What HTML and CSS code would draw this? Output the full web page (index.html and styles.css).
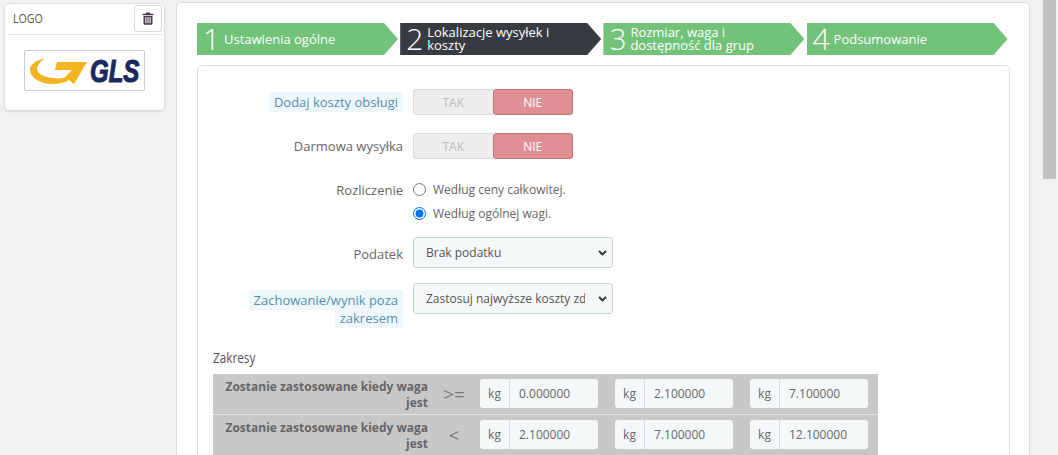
FILE: index.html
```html
<!DOCTYPE html>
<html lang="pl">
<head>
    <meta charset="UTF-8">
    <title>Przewoźnik</title>
    <link rel="stylesheet" href="styles.css">
</head>
<body>
    <div class="page">
        <aside class="logo-card">
            <div class="logo-head">
                <span class="logo-title">LOGO</span>
                <button class="trash-button" type="button">
                    <svg width="12" height="13" viewBox="0 0 12 13">
                        <path d="M4.2 0.5h3.6l0.6 1.300H11.500v1.500H0.500V1.800h3.100z" fill="#4c3b4e"/>
                        <path fill-rule="evenodd" d="M1.500 4h9v7.500a1.200 1.200 0 0 1-1.200 1.200H2.700a1.200 1.200 0 0 1-1.200-1.200zM3.300 5.300v6h1.100v-6zM5.450 5.300v6h1.100v-6zM7.600 5.300v6h1.100v-6z" fill="#4c3b4e"/>
                    </svg>
                </button>
            </div>
            <div class="logo-box">
                <svg class="gls-arrow" width="65" height="39" viewBox="0 0 65 39">
                    <path d="M20 7C10 10 4 14 5 20c1 7 11 13 22 13 6 0 11-1 16-3l1-5c-5 2-10 3-16 2C18 26 11 22 12 17c1-4 4-7 8-10z" fill="#f2b322"/>
                    <path d="M32 11h30L49 33 40 26 47 19H30z" fill="#f5b41f"/>
                </svg>
                <span class="gls-text">GLS</span>
            </div>
        </aside>

        <main class="main-card">
            <ul class="steps">
                <li class="step"><span class="step-num">1</span><span class="step-text">Ustawienia ogólne</span></li>
                <li class="step step-active"><span class="step-num">2</span><span class="step-text">Lokalizacje wysyłek i koszty</span></li>
                <li class="step"><span class="step-num">3</span><span class="step-text">Rozmiar, waga i dostępność dla grup</span></li>
                <li class="step"><span class="step-num">4</span><span class="step-text">Podsumowanie</span></li>
            </ul>

            <form class="panel">
                <div class="row row-switch">
                    <label class="row-label"><span class="hint">Dodaj koszty obsługi</span></label>
                    <div class="switch"><span class="switch-off">TAK</span><span class="switch-on">NIE</span></div>
                </div>
                <div class="row row-switch">
                    <label class="row-label">Darmowa wysyłka</label>
                    <div class="switch"><span class="switch-off">TAK</span><span class="switch-on">NIE</span></div>
                </div>
                <div class="row row-radio">
                    <label class="row-label">Rozliczenie</label>
                    <div class="radios">
                        <label class="radio"><input type="radio" name="billing">Według ceny całkowitej.</label>
                        <label class="radio"><input type="radio" name="billing" checked>Według ogólnej wagi.</label>
                    </div>
                </div>
                <div class="row row-select">
                    <label class="row-label">Podatek</label>
                    <div class="select-wrap">
                        <select class="field-select"><option>Brak podatku</option></select>
                        <svg class="select-arrow" width="9" height="6" viewBox="0 0 9 6"><path d="M1 1l3.500 3.500L8 1" fill="none" stroke="#333" stroke-width="1.800"/></svg>
                    </div>
                </div>
                <div class="row row-select">
                    <label class="row-label"><span class="hint">Zachowanie/wynik poza zakresem</span></label>
                    <div class="select-wrap">
                        <select class="field-select"><option>Zastosuj najwyższe koszty zdefiniowane</option></select>
                        <svg class="select-arrow" width="9" height="6" viewBox="0 0 9 6"><path d="M1 1l3.500 3.500L8 1" fill="none" stroke="#333" stroke-width="1.800"/></svg>
                    </div>
                </div>

                <h3 class="ranges-title"><span class="narrow">Zakresy</span></h3>
                <table class="ranges">
                    <tr>
                        <td class="range-label">Zostanie zastosowane kiedy waga jest</td>
                        <td class="range-sign">&gt;=</td>
                        <td class="range-cell"><div class="unit-input"><span class="unit">kg</span><span class="unit-value">0.000000</span></div></td>
                        <td class="range-cell"><div class="unit-input"><span class="unit">kg</span><span class="unit-value">2.100000</span></div></td>
                        <td class="range-cell range-last"><div class="unit-input"><span class="unit">kg</span><span class="unit-value">7.100000</span></div></td>
                    </tr>
                    <tr>
                        <td class="range-label">Zostanie zastosowane kiedy waga jest</td>
                        <td class="range-sign">&lt;</td>
                        <td class="range-cell"><div class="unit-input"><span class="unit">kg</span><span class="unit-value">2.100000</span></div></td>
                        <td class="range-cell"><div class="unit-input"><span class="unit">kg</span><span class="unit-value">7.100000</span></div></td>
                        <td class="range-cell range-last"><div class="unit-input"><span class="unit">kg</span><span class="unit-value">12.100000</span></div></td>
                    </tr>
                </table>
            </form>
        </main>

        <div class="scrollbar"><div class="scrollbar-thumb"></div></div>
    </div>
</body>
</html>
```

FILE: styles.css
```css
html, body {
    height: 100%;
    overflow: hidden;
}
body {
    margin: 0;
    background-color: #eff1f2;
    color: #666;
    font-family: 'Open Sans', sans-serif;
    font-size: 12px;
}
.page {
    display: flex;
    align-items: flex-start;
    height: 455px;
    overflow: hidden;
    padding: 3px 0 0 4px;
    box-sizing: border-box;
}

/* left card */
.logo-card {
    width: 161px;
    height: 108px;
    box-sizing: border-box;
    padding: 1px 2px 0 3px;
    background-color: #fff;
    border: 1px solid #dcdfe0;
    border-radius: 5px;
    box-shadow: 0 1px 2px rgba(0, 0, 0, 0.08);
}
.logo-head {
    display: flex;
    justify-content: space-between;
    align-items: flex-start;
    height: 30px;
    box-sizing: border-box;
    padding-left: 5px;
    border-bottom: 1px solid #e6e6e6;
}
.logo-title {
    display: inline-block;
    font-size: 13px;
    line-height: 27px;
    color: #555;
    transform: scaleX(0.82);
    transform-origin: left center;
}
.trash-button {
    display: flex;
    align-items: center;
    justify-content: center;
    width: 28px;
    height: 27px;
    padding: 0;
    background-color: #fff;
    border: 1px solid #d9d9d9;
    border-radius: 3px;
}
.logo-box {
    display: flex;
    align-items: flex-start;
    width: 119px;
    height: 39px;
    margin: 15px 0 0 16px;
    background-color: #fff;
    border: 1px solid #ccc;
    border-radius: 2px;
}
.gls-text {
    display: inline-block;
    font-family: 'Liberation Sans', sans-serif;
    font-size: 24px;
    line-height: 39px;
    font-weight: bold;
    font-style: italic;
    color: #1b2a5e;
    -webkit-text-stroke: 0.9px #1b2a5e;
    transform: scaleY(1.33);
    transform-origin: center;
}

/* main card */
.main-card {
    width: 854px;
    height: 460px;
    margin: -1px 0 0 11px;
    box-sizing: border-box;
    padding: 20px 20px 0 19px;
    background-color: #fff;
    border: 1px solid #dcdfe0;
    border-radius: 5px;
    flex-shrink: 0;
}
.steps {
    display: flex;
    gap: 2.2px;
    list-style: none;
    margin: 0 0 10px 1px;
    padding: 0;
}
.step {
    display: flex;
    align-items: center;
    width: 201px;
    height: 32px;
    box-sizing: border-box;
    padding-left: 6px;
    padding-right: 20px;
    background-color: #72c279;
    color: #fff;
    clip-path: polygon(0 0, 187px 0, 100% 50%, 187px 100%, 0 100%);
}
.step-active {
    background-color: #363a41;
}
.step-num {
    flex-shrink: 0;
    font-size: 30px;
    line-height: 32px;
    font-weight: 300;
    width: 17px;
    margin-right: 4px;
}
.step-text {
    font-size: 13px;
    line-height: 13px;
}

.panel {
    width: 813px;
    height: 420px;
    margin-left: 1px;
    box-sizing: border-box;
    padding: 23px 15px 0 15px;
    border: 1px solid #dcdfe0;
    border-radius: 5px;
}
.row {
    display: flex;
    gap: 10px;
}
.row-label {
    width: 190px;
    flex-shrink: 0;
    text-align: right;
    font-size: 13px;
    line-height: 18px;
    color: #666;
}
.hint {
    background-color: #eef7fb;
    color: #5a8ea8;
    padding: 1px 5px;
    -webkit-box-decoration-break: clone;
    box-decoration-break: clone;
}

/* yes / no switch */
.row-switch {
    align-items: center;
    margin-bottom: 18px;
}
.switch {
    display: flex;
    width: 160px;
    height: 26px;
    font-size: 12px;
    text-align: center;
    line-height: 25px;
}
.switch-off {
    flex: 1;
    background-color: #eee;
    color: #bbb;
    border: 1px solid #dcdcdc;
    border-right: none;
    border-radius: 3px 0 0 3px;
}
.switch-on {
    flex: 1;
    background-color: #e08f95;
    color: #fff;
    border: 1px solid #b7777c;
    border-radius: 3px;
}

/* billing radios */
.row-radio {
    padding-top: 4px;
    margin-bottom: 15px;
}
.radios {
    display: flex;
    flex-direction: column;
    gap: 7px;
}
.radio {
    display: flex;
    align-items: center;
    height: 17px;
    font-size: 12px;
    color: #666;
}
.radio input {
    width: 13px;
    height: 13px;
    margin: 0 7px 0 0;
}

.row-select {
    margin-bottom: 15px;
    align-items: flex-start;
}
.row-select .row-label {
    padding-top: 7.5px;
}
.select-wrap {
    position: relative;
    width: 200px;
    height: 31px;
}
.field-select {
    width: 200px;
    height: 31px;
    padding: 0 27px 0 12px;
    background-color: #f5f8f9;
    border: 1px solid #c7d6db;
    border-radius: 3px;
    color: #555;
    font-family: 'Open Sans', sans-serif;
    font-size: 12px;
    appearance: none;
    -webkit-appearance: none;
}
.select-arrow {
    position: absolute;
    top: 13px;
    right: 6px;
}

/* ranges table */
.ranges-title {
    margin: 23px 0 8px 0;
    font-size: 14px;
    line-height: 16px;
    font-weight: normal;
    color: #555;
}
.narrow {
    display: inline-block;
    transform: scaleX(0.84);
    transform-origin: left center;
}
.ranges {
    width: 665px;
    table-layout: fixed;
    border-collapse: collapse;
    background-color: #c8c8c8;
}
.ranges tr + tr td {
    border-top: 1px solid #e4e4e4;
}
.ranges td {
    height: 40px;
    padding: 0;
}
.ranges td.range-label {
    width: 215px;
    padding-top: 2px;
    box-sizing: border-box;
    text-align: right;
    font-weight: bold;
    font-size: 12px;
    line-height: 16px;
    color: #666;
}
.range-sign {
    width: 52px;
    text-align: center;
    font-size: 19px;
    color: #777;
}
.range-cell {
    width: 135px;
}
.range-last {
    width: 128px;
}
.unit-input {
    display: flex;
    width: 118px;
    height: 29px;
    line-height: 29px;
    background-color: #f5f8f9;
    border-radius: 3px;
    font-size: 12px;
    color: #666;
}
.unit {
    width: 29px;
    text-align: center;
    border-right: 1px solid #d3dde0;
}
.unit-value {
    padding-left: 9px;
}

/* fake page scrollbar */
.scrollbar {
    width: 17px;
    height: 455px;
    margin: -3px 0 0 11px;
    background-color: #f1f1f1;
    flex-shrink: 0;
}
.scrollbar-thumb {
    width: 13px;
    height: 179px;
    margin-left: 2px;
    background-color: #c1c1c1;
}
```
